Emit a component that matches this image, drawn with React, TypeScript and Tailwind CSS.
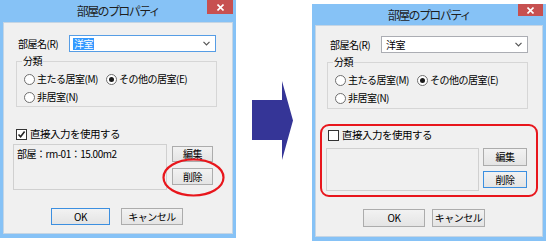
import React from 'react';

function Radio({ checked }: { checked?: boolean }) {
  return (
    <span className="flex items-center justify-center w-[11px] h-[11px] rounded-full border border-[#6f6f6f] bg-white shrink-0">
      {checked && <span className="w-[5px] h-[5px] rounded-full bg-[#1a1a1a]" />}
    </span>
  );
}

function Checkbox({ checked }: { checked?: boolean }) {
  return (
    <span className="flex items-center justify-center w-[11px] h-[11px] border border-[#333333] bg-white shrink-0">
      {checked && (
        <svg width="9" height="9" viewBox="0 0 9 9">
          <path d="M1.5 4.5 L3.6 6.8 L7.6 1.6" fill="none" stroke="#222" strokeWidth="1.6" />
        </svg>
      )}
    </span>
  );
}

function Btn({ label, className, focused }: { label: string; className: string; focused?: boolean }) {
  return (
    <div
      className={`flex items-center justify-center border bg-gradient-to-b from-[#f2f2f2] to-[#e4e4e4] ${
        focused ? 'border-[#3c8fe0]' : 'border-[#acacac]'
      } ${className}`}
    >
      {label}
    </div>
  );
}

function Dialog({ after }: { after?: boolean }) {
  return (
    <div
      className={`relative flex flex-col shrink-0 bg-[#86c2f6] px-[3px] pb-[4px] ${
        after ? 'w-[234px] h-[237px] mt-[4px] ml-[19px]' : 'w-[236px] h-[238px]'
      }`}
    >
      <div className={`relative flex items-center justify-center shrink-0 ${after ? 'h-[21px]' : 'h-[22px]'}`}>
        <span className="text-[12px] leading-none tracking-[-1.6px] text-[#1e1e1e]">部屋のプロパティ</span>
        <div
          className={`absolute right-0 top-0 flex items-center justify-center bg-[#c75050] ${
            after ? 'w-[25px] h-[12px]' : 'w-[26px] h-[14px]'
          }`}
        >
          <svg width="7" height="7" viewBox="0 0 7 7">
            <path d="M0.5 0.5 L6.5 6.5 M6.5 0.5 L0.5 6.5" stroke="#fff" strokeWidth="1.6" />
          </svg>
        </div>
      </div>

      <div className="flex-1 flex flex-col border border-[#c5d5e4] bg-[#f0f0f0] text-[10px] leading-[12px] tracking-[-0.5px] text-black">
        <div className={`flex items-center pl-[14px] ${after ? 'mt-[10px]' : 'mt-[12px]'}`}>
          <span className="w-[51px]">部屋名(R)</span>
          <div
            className={`flex items-center w-[147px] h-[17px] border bg-white ${
              after ? 'border-[#abadb3]' : 'border-[#569de5]'
            }`}
          >
            <span className={`ml-[3px] px-[1px] ${after ? '' : 'bg-[#3399ff] text-white'}`}>洋室</span>
            <svg className="ml-auto mr-[5px]" width="7" height="5" viewBox="0 0 7 5">
              <path d="M0.5 0.8 L3.5 3.8 L6.5 0.8" fill="none" stroke="#555" strokeWidth="1.2" />
            </svg>
          </div>
        </div>

        <div
          className={`relative flex flex-col gap-[6px] mt-[9px] w-[201px] pt-[11px] pl-[7px] border border-[#d6d6d6] ${
            after ? 'ml-[11px] h-[47px]' : 'ml-[12px] h-[46px]'
          }`}
        >
          <span className="absolute -top-[7px] left-[5px] bg-[#f0f0f0] px-[1px]">分類</span>
          <div className="flex items-center">
            <div className="flex items-center gap-[2px] w-[82px]">
              <Radio />
              <span>主たる居室(M)</span>
            </div>
            <div className="flex items-center gap-[2px]">
              <Radio checked />
              <span>その他の居室(E)</span>
            </div>
          </div>
          <div className="flex items-center gap-[2px]">
            <Radio />
            <span>非居室(N)</span>
          </div>
        </div>

        <div className={`flex items-center gap-[3px] ml-[12px] ${after ? 'mt-[20px]' : 'mt-[21px]'}`}>
          <Checkbox checked={!after} />
          <span className="text-[10.5px]">直接入力を使用する</span>
        </div>

        <div className={`flex ${after ? 'mt-[7px] ml-[10px]' : 'mt-[4px] ml-[9px]'}`}>
          <div
            className={`border border-[#d0d0d0] bg-[#f0f0f0] pl-[3px] pt-[3px] ${
              after ? 'w-[153px] h-[43px]' : 'w-[154px] h-[46px]'
            }`}
          >
            {!after && <span>部屋：rm-01：15.00m2</span>}
          </div>
          <div className={`flex flex-col ${after ? 'ml-[4px] gap-[5px]' : 'ml-[5px] pt-[2px] gap-[6px]'}`}>
            <Btn label="編集" className={after ? 'w-[44px] h-[18px]' : 'w-[41px] h-[16px]'} />
            <Btn label="削除" focused={after} className={after ? 'w-[44px] h-[17px]' : 'w-[41px] h-[17px]'} />
          </div>
        </div>

        <div className="flex mt-[18px] ml-[47px]">
          <Btn label="OK" focused={!after} className={after ? 'w-[62px] h-[18px]' : 'w-[59px] h-[17px]'} />
          <Btn
            label="キャンセル"
            className={after ? 'ml-[7px] w-[53px] h-[18px]' : 'ml-[11px] w-[62px] h-[17px]'}
          />
        </div>
      </div>

      {after ? (
        <div className="absolute left-[8px] top-[120px] w-[218px] h-[73px] rounded-[9px] border-2 border-[#e8161c]" />
      ) : (
        <svg className="absolute left-[162px] top-[158px]" width="63" height="39" viewBox="0 0 63 39">
          <ellipse cx="31.5" cy="19.5" rx="30" ry="18" fill="none" stroke="#e8161c" strokeWidth="2.2" />
        </svg>
      )}
    </div>
  );
}

export default function App() {
  return (
    <div className="flex items-start w-[549px] h-[242px] overflow-hidden bg-white font-['Noto_Sans_CJK_JP','Noto_Sans',sans-serif]">
      <Dialog />
      <svg className="ml-[16px] mt-[81px] shrink-0" width="41" height="79" viewBox="0 0 41 79">
        <polygon points="0,19 30,19 30,0 41,39.5 30,79 30,59 0,59" fill="#353597" />
      </svg>
      <Dialog after />
    </div>
  );
}
